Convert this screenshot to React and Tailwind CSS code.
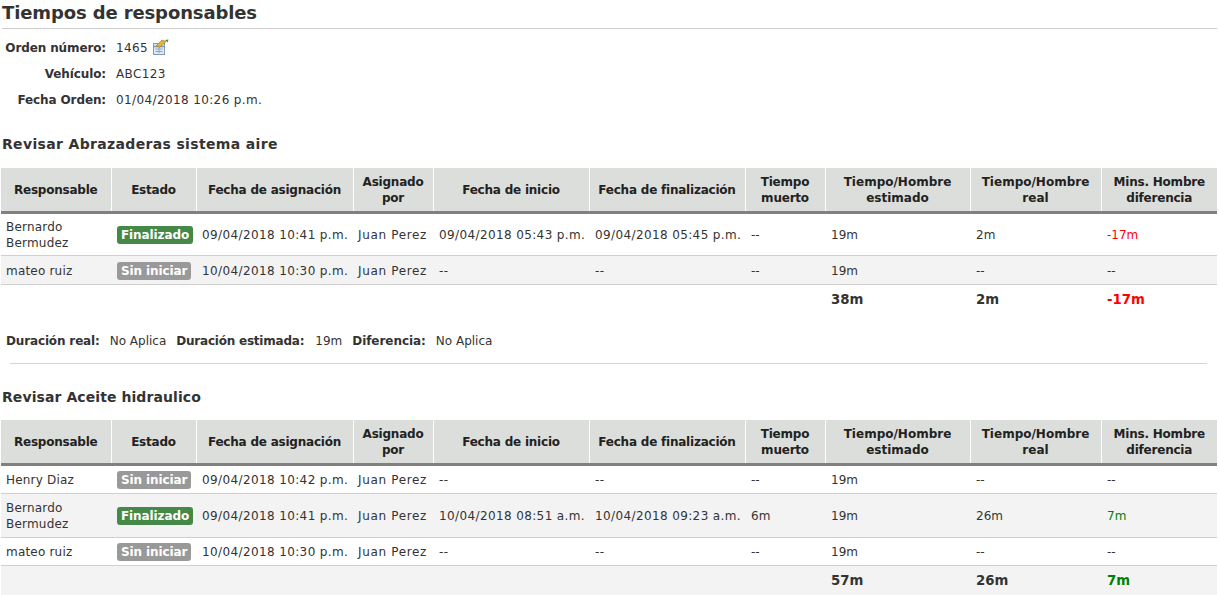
const widths = [110, 85, 157, 80, 156, 156, 80, 145, 131, 116];

const headers = [
  'Responsable',
  'Estado',
  'Fecha de asignación',
  <>Asignado<br />por</>,
  'Fecha de inicio',
  'Fecha de finalización',
  <>Tiempo<br />muerto</>,
  <span className="tracking-normal">Tiempo/Hombre<br />estimado</span>,
  <span className="tracking-normal">Tiempo/Hombre<br />real</span>,
  <>Mins. Hombre<br />diferencia</>,
];

const tables = [
  {
    title: 'Revisar Abrazaderas sistema aire',
    titleClass: 'mt-[21px] mb-[14px] tracking-[0.34px]',
    rows: [
      { name: <>Bernardo<br />Bermudez</>, done: true, asignacion: '09/04/2018 10:41 p.m.', inicio: '09/04/2018 05:43 p.m.', fin: '09/04/2018 05:45 p.m.', muerto: '--', est: '19m', real: '2m', diff: '-17m', color: 'text-[#ff0000]', h: 'h-[43px]' },
      { name: 'mateo ruiz', done: false, asignacion: '10/04/2018 10:30 p.m.', inicio: '--', fin: '--', muerto: '--', est: '19m', real: '--', diff: '--', color: '', h: 'h-[29px]' },
    ],
    totals: { est: '38m', real: '2m', diff: '-17m', color: 'text-[#ff0000]' },
  },
  {
    title: 'Revisar Aceite hidraulico',
    titleClass: 'mt-[23px] mb-[13px] tracking-[0.08px]',
    rows: [
      { name: 'Henry Diaz', done: false, asignacion: '09/04/2018 10:42 p.m.', inicio: '--', fin: '--', muerto: '--', est: '19m', real: '--', diff: '--', color: '', h: 'h-[29px]' },
      { name: <>Bernardo<br />Bermudez</>, done: true, asignacion: '09/04/2018 10:41 p.m.', inicio: '10/04/2018 08:51 a.m.', fin: '10/04/2018 09:23 a.m.', muerto: '6m', est: '19m', real: '26m', diff: '7m', color: 'text-[#008000]', h: 'h-[44px]' },
      { name: 'mateo ruiz', done: false, asignacion: '10/04/2018 10:30 p.m.', inicio: '--', fin: '--', muerto: '--', est: '19m', real: '--', diff: '--', color: '', h: 'h-[28px]' },
    ],
    totals: { est: '57m', real: '26m', diff: '7m', color: 'text-[#008000]' },
  },
];

function Badge({ done }) {
  return (
    <span className={`inline-block rounded-[3px] px-[4px] text-[12px] font-bold leading-[18px] tracking-[-0.1px] whitespace-nowrap text-white ${done ? 'bg-[#468847]' : 'bg-[#999999]'}`}>
      {done ? 'Finalizado' : 'Sin iniciar'}
    </span>
  );
}

function NoteIcon() {
  return (
    <svg width="17" height="16" viewBox="0 0 17 16" className="ml-[4px] -mt-[2px] inline-block">
      <rect x="1.500" y="4.500" width="11" height="11" fill="#dfe8f3" stroke="#7f9abb" />
      <path d="M2 7.500h10" stroke="#7f9abb" fill="none" strokeWidth="1.500" />
      <path d="M3.500 10h7M3.500 12.500h7M7 8v6" stroke="#8fa6c2" fill="none" />
      <path d="M4 7 10 1l4 1.500-6 5.500z" fill="#e0b53a" stroke="#a07f22" strokeWidth="0.7" />
      <path d="M13 1l3.500-.5-.8 3z" fill="#4f8f36" />
    </svg>
  );
}

function InfoRow({ label, children }) {
  return (
    <div className="flex h-[26px] items-center">
      <div className="w-[106px] text-right font-bold tracking-[-0.12px]">{label}</div>
      <div className="pl-[10px] flex items-center tracking-[0.38px]">{children}</div>
    </div>
  );
}

function TaskTable({ table }) {
  const lastGrey = table.rows.length % 2 === 1;
  return (
    <table className="ml-px w-[1216px] table-fixed border-collapse">
      <colgroup>
        {widths.map((w, i) => (
          <col key={i} style={{ width: w }} />
        ))}
      </colgroup>
      <thead>
        <tr className="h-[44px] border-b-[3px] border-[#808080] bg-[#dcdedb]">
          {headers.map((h, i) => (
            <th key={i} className={`px-[2px] pt-[2px] text-center text-[12px] font-bold leading-[16px] tracking-[-0.22px] text-[#222] ${i > 0 ? 'border-l border-white' : ''}`}>
              {h}
            </th>
          ))}
        </tr>
      </thead>
      <tbody>
        {table.rows.map((r, i) => (
          <tr key={i} className={`${r.h} border-b border-[#cfcfcf] ${i % 2 === 1 ? 'bg-[#f3f3f3]' : ''}`}>
            <td className="pl-[5px] pt-[2px] leading-[16px] tracking-[0.2px]">{r.name}</td>
            <td className="pl-[6px] pt-[2px]"><Badge done={r.done} /></td>
            <td className="pl-[6px] pt-[2px] whitespace-nowrap tracking-[0.38px]">{r.asignacion}</td>
            <td className="pl-[5px] pt-[2px] whitespace-nowrap tracking-[0.65px]">Juan Perez</td>
            <td className="pl-[6px] pt-[2px] whitespace-nowrap tracking-[0.38px]">{r.inicio}</td>
            <td className="pl-[6px] pt-[2px] whitespace-nowrap tracking-[0.38px]">{r.fin}</td>
            <td className="pl-[6px] pt-[2px]">{r.muerto}</td>
            <td className="pl-[6px] pt-[2px]">{r.est}</td>
            <td className="pl-[6px] pt-[2px]">{r.real}</td>
            <td className={`pl-[6px] pt-[2px] ${r.color}`}>{r.diff}</td>
          </tr>
        ))}
        <tr className={`h-[31px] text-[13.3px] font-bold ${lastGrey ? 'bg-[#f3f3f3]' : ''}`}>
          <td colSpan={7} />
          <td className="pl-[6px]">{table.totals.est}</td>
          <td className="pl-[6px]">{table.totals.real}</td>
          <td className={`pl-[6px] ${table.totals.color}`}>{table.totals.diff}</td>
        </tr>
      </tbody>
    </table>
  );
}

function TableTitle({ table }) {
  return <h2 className={`ml-[2px] text-[14px] font-bold leading-[20px] ${table.titleClass}`}>{table.title}</h2>;
}

export default function App() {
  return (
    <div className="h-[595px] w-[1219px] overflow-hidden bg-white font-['Verdana','DejaVu_Sans',sans-serif] text-[12px] text-[#333]">
      <h1 className="ml-[2px] h-[29px] w-[1215px] border-b border-[#cccccc] text-[18px] font-bold leading-[25px] tracking-[-0.12px] text-[#333]">
        Tiempos de responsables
      </h1>
      <div className="pt-[6px]">
        <InfoRow label="Orden número:">1465<NoteIcon /></InfoRow>
        <InfoRow label="Vehículo:">ABC123</InfoRow>
        <InfoRow label="Fecha Orden:">01/04/2018 10:26 p.m.</InfoRow>
      </div>
      <TableTitle table={tables[0]} />
      <TaskTable table={tables[0]} />
      <div className="mt-[12px] flex h-[28px] items-center pl-[6px]">
        <b className="tracking-[-0.15px]">Duración real:</b>
        <span className="ml-[10px]">No Aplica</span>
        <b className="ml-[10px] tracking-[-0.22px]">Duración estimada:</b>
        <span className="ml-[11px]">19m</span>
        <b className="ml-[10px] tracking-[-0.05px]">Diferencia:</b>
        <span className="ml-[10px]">No Aplica</span>
      </div>
      <hr className="ml-[10px] mt-[8px] w-[1197px] border-[#d5d5d5]" />
      <TableTitle table={tables[1]} />
      <TaskTable table={tables[1]} />
    </div>
  );
}
